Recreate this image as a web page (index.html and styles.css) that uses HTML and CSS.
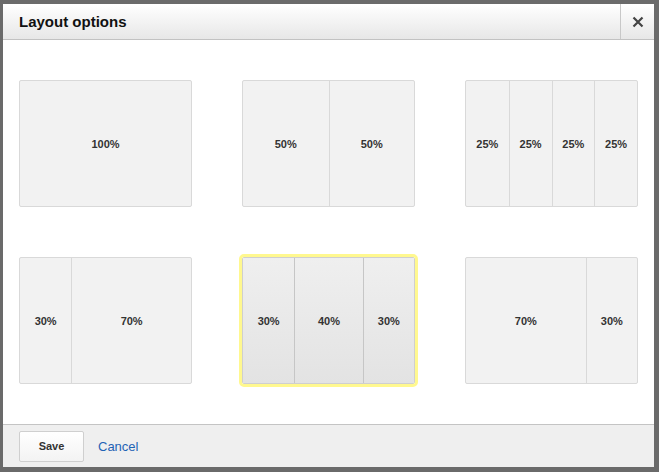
FILE: index.html
```html
<!DOCTYPE html>
<html>
<head>
<meta charset="utf-8">
<link rel="stylesheet" href="styles.css">
</head>
<body>
<div class="dialog">
  <div class="header">
    <div class="title">Layout options</div>
    <div class="close">
      <svg width="12" height="12" viewBox="0 0 12 12"><path d="M1.5 1.5 L10.5 10.5 M10.5 1.5 L1.5 10.5" stroke="#444" stroke-width="2.2" fill="none"/></svg>
    </div>
  </div>
  <div class="content">
    <div class="grid">
      <div class="card"><div class="pane p100">100%</div></div>
      <div class="card"><div class="pane p50">50%</div><div class="pane p50">50%</div></div>
      <div class="card"><div class="pane p25">25%</div><div class="pane p25">25%</div><div class="pane p25">25%</div><div class="pane p25">25%</div></div>
      <div class="card"><div class="pane p30">30%</div><div class="pane p70">70%</div></div>
      <div class="card selected"><div class="pane p30">30%</div><div class="pane p40">40%</div><div class="pane p30">30%</div></div>
      <div class="card"><div class="pane p70">70%</div><div class="pane p30">30%</div></div>
    </div>
  </div>
  <div class="footer">
    <button class="save">Save</button>
    <a class="cancel">Cancel</a>
  </div>
</div>
</body>
</html>
```
FILE: styles.css
```css
html, body { margin: 0; padding: 0; }
body {
  background: #6a6a6a;
  width: 659px;
  height: 472px;
  overflow: hidden;
  font-family: "Liberation Sans", Arial, sans-serif;
}
.dialog {
  margin: 4px 0 0 3px;
  width: 651px;
  height: 463px;
  background: #fff;
  display: flex;
  flex-direction: column;
}
.header {
  height: 35px;
  border-bottom: 1px solid #c2c2c2;
  background: linear-gradient(#ffffff, #e7e7e7);
  display: flex;
  align-items: center;
}
.title {
  flex: 1;
  padding-left: 16px;
  font-size: 15px;
  font-weight: bold;
  color: #111;
}
.close {
  width: 33px;
  height: 35px;
  border-left: 1px solid #c8c8c8;
  display: flex;
  align-items: center;
  justify-content: center;
}
.content {
  flex: 1;
  padding: 40px 16px 0 16px;
}
.grid {
  display: grid;
  grid-template-columns: repeat(3, 173px);
  grid-auto-rows: 127px;
  justify-content: space-between;
  row-gap: 50px;
}
.card {
  display: flex;
  border: 1px solid #d9d9d9;
  border-radius: 2px;
  background: #f2f2f2;
  box-sizing: border-box;
}
.pane {
  display: flex;
  align-items: center;
  justify-content: center;
  padding-top: 1px;
  font-size: 11px;
  font-weight: bold;
  color: #333;
  box-sizing: border-box;
}
.pane + .pane { border-left: 1px solid #d9d9d9; }
.p100 { flex: 0 0 100%; }
.p50 { flex: 0 0 50%; }
.p25 { flex: 0 0 25%; }
.p30 { flex: 0 0 30%; }
.p40 { flex: 0 0 40%; }
.p70 { flex: 0 0 70%; }
.card.selected {
  outline: 3px solid #fff88f;
  border-color: #cfcfcf;
  background: #e8e8e8;
}
.card.selected .pane {
  background: linear-gradient(#efefef, #e3e3e3);
}
.card.selected .pane + .pane { border-left: 1px solid #c6c6c6; }
.footer {
  height: 42px;
  border-top: 1px solid #c4c4c4;
  background: #efefef;
  display: flex;
  align-items: center;
  padding-left: 16px;
}
.save {
  width: 65px;
  height: 31px;
  border: 1px solid #cfcfcf;
  border-radius: 2px;
  background: linear-gradient(#ffffff, #f3f3f3);
  font-family: "Liberation Sans", Arial, sans-serif;
  font-size: 11px;
  font-weight: bold;
  color: #333;
  padding: 0;
}
.cancel {
  margin-left: 14px;
  font-size: 13px;
  color: #1f63b5;
}
```
